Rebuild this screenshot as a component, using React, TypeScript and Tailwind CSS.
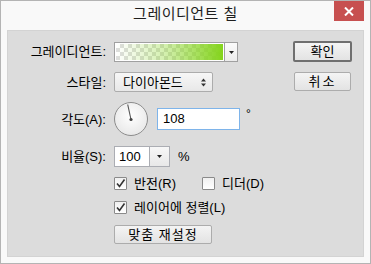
export default function App() {
  const btn =
    "flex items-center justify-center bg-gradient-to-b from-[#f4f4f4] to-[#e3e3e3] rounded-[2px] text-[13px] text-black";
  const label = "w-[99px] text-right text-[13px] leading-none pr-[1px]";
  return (
    <div className="w-[371px] h-[264px] border border-[#b4b4b4] bg-[#f9f9f9] flex flex-col font-['Liberation_Sans','Noto_Sans_CJK_KR',sans-serif] text-black">
      <div className="h-[29px] grid grid-cols-[1fr_auto_1fr]">
        <div />
        <div className="self-center mb-[3px] text-[15px] text-[#1e1e1e] tracking-[0.5px]">그레이디언트 칠</div>
        <div className="flex justify-end items-start pr-[6px]">
          <div className="w-[30px] h-[20px] bg-[#c75050] flex items-center justify-center">
            <svg width="10" height="9" viewBox="0 0 10 9">
              <path d="M1 0.5 L9 8.5 M9 0.5 L1 8.5" stroke="#fff" strokeWidth="2" />
            </svg>
          </div>
        </div>
      </div>
      <div className="mx-[6px] mb-[6px] flex-1 bg-[#dcdcdc] border border-[#d3d3d3] flex">
        <div className="w-[285px] flex flex-col pt-[11px]">
          {/* gradient */}
          <div className="flex items-center h-[20px]">
            <div className={label + " mb-[2px]"}>그레이디언트:</div>
            <div className="ml-[7px] w-[124px] h-[20px] border border-[#a0a0a0] bg-white flex">
              <div className="flex-1 m-[1px] bg-[linear-gradient(to_right,rgba(132,212,28,0),rgba(132,212,28,0.35)_45%,#84d41c),repeating-conic-gradient(#dedede_0%_25%,#ffffff_0%_50%)] bg-size-[100%_100%,8px_8px]" />
              <div className="w-[13px] border-l border-[#a0a0a0] bg-gradient-to-b from-[#fbfbfb] to-[#ececec] flex items-center justify-center">
                <svg width="5" height="3" viewBox="0 0 5 3">
                  <path d="M0 0 H5 L2.5 3 Z" fill="#222" />
                </svg>
              </div>
            </div>
          </div>
          {/* style */}
          <div className="flex items-center h-[20px] mt-[10px]">
            <div className={label}>스타일:</div>
            <div className="ml-[7px] w-[99px] h-[20px] border border-[#acacac] rounded-[2px] bg-gradient-to-b from-[#f7f7f7] to-[#e8e8e8] flex items-center pl-[8px] pr-[6px]">
              <span className="flex-1 text-[13px] leading-none">다이아몬드</span>
              <svg width="5" height="9" viewBox="0 0 5 9">
                <path d="M0 3.5 L2.5 0.5 L5 3.5 Z M0 5.5 H5 L2.5 8.5 Z" fill="#333" />
              </svg>
            </div>
          </div>
          {/* angle */}
          <div className="flex items-center h-[34px] mt-[10px]">
            <div className={label}>각도(A):</div>
            <div className="ml-[7px] w-[34px] h-[34px] rounded-full border border-[#8c8c8c] bg-[radial-gradient(circle_at_50%_40%,#ffffff,#e2e2e2)]">
              <svg width="32" height="32" viewBox="0 0 32 32">
                <path d="M16 16.5 L12.7 1.5" stroke="#555" strokeWidth="1.1" />
                <circle cx="16" cy="16.5" r="1.6" fill="#444" />
              </svg>
            </div>
            <div className="ml-[9px] w-[83px] h-[22px] border border-[#7eb4ea] bg-white flex items-center pl-[5px] text-[13px]">
              108
            </div>
            <div className="ml-[6px] self-start mt-[6px] text-[12px] leading-none">°</div>
          </div>
          {/* ratio */}
          <div className="flex items-center h-[21px] mt-[10px]">
            <div className={label}>비율(S):</div>
            <div className="ml-[7px] w-[56px] h-[21px] border border-[#abadb3] bg-white flex">
              <div className="flex-1 flex items-center pl-[4px] text-[13px]">100</div>
              <div className="w-[20px] border-l border-[#abadb3] bg-gradient-to-b from-[#f7f7f7] to-[#e8e8e8] flex items-center justify-center">
                <svg width="5" height="3" viewBox="0 0 5 3">
                  <path d="M0 0 H5 L2.5 3 Z" fill="#222" />
                </svg>
              </div>
            </div>
            <div className="ml-[8px] text-[13px]">%</div>
          </div>
          {/* checkbox row 1 */}
          <div className="flex items-center h-[13px] mt-[10px] pl-[106px]">
            <div className="w-[88px] flex items-center">
              <CheckBox checked />
              <span className="ml-[7px] text-[13px] leading-none">반전(R)</span>
            </div>
            <CheckBox />
            <span className="ml-[7px] text-[13px] leading-none">디더(D)</span>
          </div>
          {/* checkbox row 2 */}
          <div className="flex items-center h-[13px] mt-[11px] pl-[106px]">
            <CheckBox checked />
            <span className="ml-[7px] text-[13px] leading-none">레이어에 정렬(L)</span>
          </div>
          {/* reset */}
          <div className="mt-[11px] pl-[106px]">
            <div className={btn + " w-[98px] h-[19px] border border-[#acacac] tracking-[1px]"}>맞춤 재설정</div>
          </div>
        </div>
        <div className="flex flex-col pt-[10px]">
          <div className={btn + " w-[59px] h-[21px] border-2 border-[#6f6f6f]"}>확인</div>
          <div className={btn + " w-[57px] h-[19px] ml-[1px] mt-[10px] border border-[#acacac] tracking-[2px]"}>취소</div>
        </div>
      </div>
    </div>
  );
}

function CheckBox({ checked = false }: { checked?: boolean }) {
  return (
    <div className="w-[13px] h-[13px] border border-[#8a8a8a] rounded-[1px] bg-gradient-to-b from-[#f0f0f0] to-[#ffffff] flex items-center justify-center">
      {checked && (
        <svg width="11" height="11" viewBox="0 0 11 11">
          <path d="M2 5.5 L4.5 8.5 L9.5 1.5" stroke="#333" strokeWidth="1.6" fill="none" />
        </svg>
      )}
    </div>
  );
}
